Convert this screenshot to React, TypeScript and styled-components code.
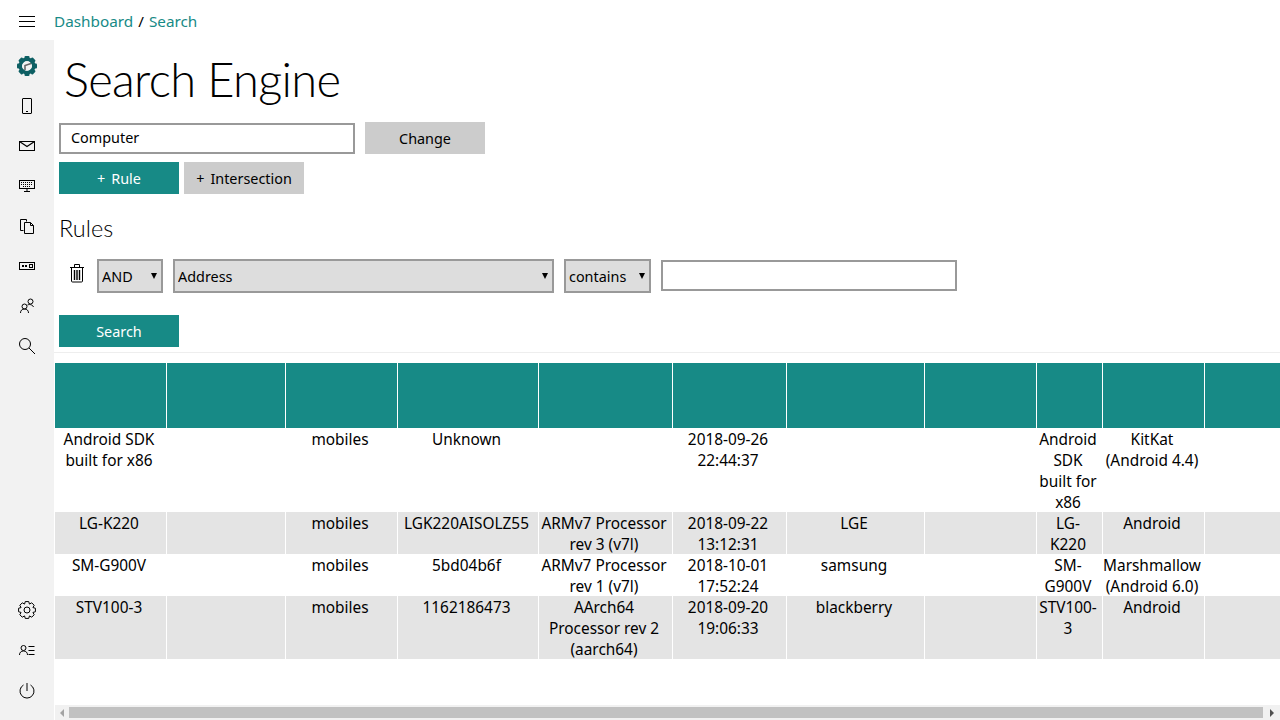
import React from "react";
import styled, { createGlobalStyle } from "styled-components";

const Global = createGlobalStyle`
  html, body { margin: 0; padding: 0; height: 100%; background: #fff; overflow: hidden; }
  body { font-family: "Noto Sans", "Open Sans", sans-serif; font-size: 15px; color: #000; }
  #root { height: 720px; }
`;

const Page = styled.div`
  width: 1280px; height: 720px; display: grid;
  grid-template-columns: 54px 1fr; grid-template-rows: 40px 1fr; overflow: hidden;
`;
const Burger = styled.div`
  display: flex; align-items: flex-start; justify-content: center; padding-top: 16px;
  svg { display: block; }
`;
const Crumbs = styled.div`
  display: flex; align-items: center; gap: 5px; font-size: 15.3px; height: 40px; padding-top: 1px; box-sizing: border-box;
  a { color: #178a86; text-decoration: none; }
`;
const Side = styled.nav`
  background: #f2f2f2; display: flex; flex-direction: column; align-items: center;
  justify-content: space-between; padding: 6px 0 9px;
`;
const SideGroup = styled.div`display: flex; flex-direction: column;`;
const SideItem = styled.div`
  width: 54px; height: 40px; display: flex; align-items: center; justify-content: center;
  svg { display: block; }
`;
const Main = styled.main`
  display: flex; flex-direction: column; min-width: 0; position: relative; overflow: hidden;
`;
const Title = styled.h1`
  margin: 8px 0 0 10px; font-family: Lato, "Noto Sans", sans-serif; font-size: 47px; line-height: 62px; font-weight: 300; letter-spacing: -0.7px;
`;
const Row = styled.div<{ $top?: number }>`
  display: flex; align-items: flex-start; margin-left: 5px; margin-top: ${p => p.$top ?? 0}px;
`;
const TextBox = styled.input<{ $spaced?: boolean }>`
  box-sizing: border-box; width: 296px; height: 31px; border: 2px solid #999; background: #fff;
  padding: 0 10px 2px; font: inherit; font-size: 14.4px; color: #000; border-radius: 0; outline: none;
  margin-top: 1px; margin-left: ${p => (p.$spaced ? 10 : 0)}px;
`;
const Btn = styled.button<{ $primary?: boolean; $spaced?: number }>`
  box-sizing: border-box; width: 120px; height: 32px; border: 0; border-radius: 0; padding: 0;
  font: inherit; font-size: 14.4px; margin-left: ${p => p.$spaced ?? 0}px;
  background: ${p => (p.$primary ? "#178a86" : "#ccc")};
  color: ${p => (p.$primary ? "#fff" : "#000")};
`;
const Plus = styled.span`margin-right: 6px;`;
const H2 = styled.h2`
  margin: 18px 0 0 5px; font-family: Lato, "Noto Sans", sans-serif; font-size: 23.5px; line-height: 32px; font-weight: 300;
`;
const TrashBox = styled.div`
  width: 38px; height: 34px; display: flex; justify-content: center;
  svg { display: block; margin-top: 5px; }
`;
const SelectWrap = styled.div<{ $spaced?: boolean }>`
  position: relative; margin-left: ${p => (p.$spaced ? 10 : 0)}px;
  &::after {
    content: ""; position: absolute; right: 6px; top: 14px; pointer-events: none;
    border-left: 3px solid transparent; border-right: 3px solid transparent; border-top: 6px solid #000;
  }
`;
const Select = styled.select<{ $w: number }>`
  display: block; box-sizing: border-box; width: ${p => p.$w}px; height: 34px; border: 2px solid #999; border-radius: 0;
  appearance: none; background-color: #ddd; color: #000; font: inherit; font-size: 14.4px; padding: 0 0 0 3px; outline: none;
`;
const Divider = styled.hr`
  border: 0; border-top: 1px solid #eee; margin: 5px 0 10px; height: 0;
`;
const TableWrap = styled.div`
  margin-left: 1px; overflow: hidden; flex: 1; min-height: 0;
`;
const Table = styled.table`
  border-collapse: separate; border-spacing: 0; table-layout: fixed; width: 1228px;
`;
const Th = styled.th`
  height: 65px; padding: 0; background: #178a86; border-right: 1px solid #fff; box-sizing: border-box;
`;
const Td = styled.td<{ $alt: boolean }>`
  padding: 0 3px 0 0; box-sizing: border-box; background: ${p => (p.$alt ? "#e4e4e4" : "#fff")};
  border-right: 1px solid #fff; text-align: center; vertical-align: top;
  font-size: 15.4px; line-height: 21px; white-space: pre-line;
`;
const CellText = styled.div`
  margin: 1px -4px -1px -4px;
`;
const ScrollBar = styled.div`
  position: absolute; left: 1px; right: 0; bottom: 0; height: 15px; background: #f1f1f1;
  display: flex; align-items: center;
`;
const Arrow = styled.div<{ $w: number }>`
  width: ${p => p.$w}px; height: 15px; display: flex; align-items: center; justify-content: center; flex: none;
`;
const Thumb = styled.div`flex: 1; height: 11px; background: #c1c1c1;`;

const widths = [112, 119, 112, 141, 134, 114, 138, 112, 66, 102, 78];
const rows = [
  ["Android SDK\nbuilt for x86", "", "mobiles", "Unknown", "", "2018-09-26\n22:44:37", "", "", "Android\nSDK\nbuilt for\nx86", "KitKat\n(Android 4.4)", ""],
  ["LG-K220", "", "mobiles", "LGK220AISOLZ55", "ARMv7 Processor\nrev 3 (v7l)", "2018-09-22\n13:12:31", "LGE", "", "LG-\nK220", "Android", ""],
  ["SM-G900V", "", "mobiles", "5bd04b6f", "ARMv7 Processor\nrev 1 (v7l)", "2018-10-01\n17:52:24", "samsung", "", "SM-\nG900V", "Marshmallow\n(Android 6.0)", ""],
  ["STV100-3", "", "mobiles", "1162186473", "AArch64\nProcessor rev 2\n(aarch64)", "2018-09-20\n19:06:33", "blackberry", "", "STV100-\n3", "Android", ""],
];

const Ico = ({ children, w = 20, h = 20 }: { children: React.ReactNode; w?: number; h?: number }) => (
  <svg width={w} height={h} viewBox={`0 0 ${w} ${h}`} fill="none" stroke="#000" strokeWidth={1}>{children}</svg>
);

const gearTeeth = Array.from({ length: 8 }, (_, i) => i * 45);

const gearPath = (() => {
  const pts: string[] = [];
  const n = 8;
  for (let i = 0; i < n; i++) {
    const a = (i / n) * Math.PI * 2;
    const step = (Math.PI * 2) / n;
    [[6.4, -0.5], [8.6, -0.26], [8.6, 0.26], [6.4, 0.5]].forEach(([r, t]) => {
      const x = 10 + r * Math.sin(a + t * step);
      const y = 9 - r * Math.cos(a + t * step);
      pts.push(`${x.toFixed(2)} ${y.toFixed(2)}`);
    });
  }
  return `M${pts.join("L")}Z`;
})();

const topIcons = [
  <svg key="g" width="22" height="22" viewBox="0 0 22 22">
    {gearTeeth.map(a => <rect key={a} x="8.5" y="1" width="5" height="5" rx="1" fill="#0d5f63" transform={`rotate(${a} 11 11)`} />)}
    <circle cx="11" cy="11" r="6.8" fill="none" stroke="#0d5f63" strokeWidth="3.4" />
    <path d="M9 15V10.5L15 8.5" fill="none" stroke="#666" strokeWidth="1.6" />
  </svg>,
  <Ico key="p"><rect x="5.5" y="2.5" width="9" height="15" rx="0.5" /><path d="M9 15.500h2" /></Ico>,
  <Ico key="m"><rect x="2.500" y="5.500" width="15" height="9" /><path d="M2.500 5.500L10 10.500L17.500 5.500" strokeWidth="1.2" /></Ico>,
  <Ico key="k"><rect x="2.500" y="4.500" width="15" height="8" /><path d="M4 6.500h12M4 8.500h12M6 10.500h8" strokeDasharray="1 1" /><path d="M10 12.500v2.500M7 15.500h6" /></Ico>,
  <Ico key="d"><path d="M3.500 3.500h6v2M3.500 3.500v11h3" /><path d="M7.500 6.500h6l3 3v8h-9z" /><path d="M13.500 6.500v3h3" /></Ico>,
  <Ico key="r"><rect x="2.500" y="6.500" width="15" height="7" /><path d="M5 10h2M8 10h2" strokeWidth="2" /><rect x="12.500" y="8.500" width="3" height="3" /></Ico>,
  <Ico key="u"><circle cx="7.500" cy="10.500" r="2.500" /><path d="M3.500 17c0-2.500 1.500-4 4-4s4 1.500 4 4" /><circle cx="13.500" cy="5.500" r="2.500" /><path d="M10.500 9c1-.8 5-.8 6 2" /></Ico>,
  <Ico key="s"><circle cx="8" cy="8" r="5.500" /><path d="M12 12l6 6" /></Ico>,
];
const bottomIcons = [
  <svg key="c" width="20" height="20" viewBox="0 0 20 20" fill="none" stroke="#000" strokeWidth="1">
    <path d={gearPath} strokeLinejoin="round" />
    <circle cx="10" cy="9" r="3" />
  </svg>,
  <Ico key="l"><circle cx="6.500" cy="7" r="2.500" /><path d="M2.500 14c0-2.500 1.500-4 4-4s4 1.500 4 4" /><path d="M11.500 5.500h6M11.500 9.500h6M11.500 13.500h6" /></Ico>,
  <Ico key="o"><path d="M6.500 4A7 7 0 1 0 13.500 4" /><path d="M10 2v8" /></Ico>,
];

export default function App() {
  return (
    <Page>
      <Global />
      <Burger>
        <svg width="16" height="11" viewBox="0 0 16 11" stroke="#000"><path d="M0 .5h16M0 5.500h16M0 10.500h16" /></svg>
      </Burger>
      <Crumbs><a href="#d">Dashboard</a><span>/</span><a href="#s">Search</a></Crumbs>
      <Side>
        <SideGroup>{topIcons.map((ic, i) => <SideItem key={i}>{ic}</SideItem>)}</SideGroup>
        <SideGroup>{bottomIcons.map((ic, i) => <SideItem key={i}>{ic}</SideItem>)}</SideGroup>
      </Side>
      <Main>
        <Title>Search Engine</Title>
        <Row $top={12}>
          <TextBox defaultValue="Computer" />
          <Btn $spaced={10}>Change</Btn>
        </Row>
        <Row $top={8}>
          <Btn $primary><Plus>+</Plus>Rule</Btn>
          <Btn $spaced={5}><Plus>+</Plus>Intersection</Btn>
        </Row>
        <H2>Rules</H2>
        <Row $top={15}>
          <TrashBox>
            <svg width="20" height="20" viewBox="0 0 20 20" fill="none" stroke="#000">
              <path d="M2 3.500h14M6.500 3.500V.5h5v3M3.500 3.500v13.500a1 1 0 0 0 1 1h9a1 1 0 0 0 1-1v-13.500" />
              <path d="M6.500 6v10M9 6v10M11.500 6v10" strokeWidth="1.400" />
            </svg>
          </TrashBox>
          <SelectWrap><Select $w={66} defaultValue="AND"><option>AND</option><option>OR</option></Select></SelectWrap>
          <SelectWrap $spaced><Select $w={381} defaultValue="Address"><option>Address</option></Select></SelectWrap>
          <SelectWrap $spaced><Select $w={87} defaultValue="contains"><option>contains</option></Select></SelectWrap>
          <TextBox $spaced />
        </Row>
        <Row $top={22}>
          <Btn $primary>Search</Btn>
        </Row>
        <Divider />
        <TableWrap>
          <Table>
            <colgroup>{widths.map((w, i) => <col key={i} width={w} />)}</colgroup>
            <thead><tr>{widths.map((_, i) => <Th key={i} />)}</tr></thead>
            <tbody>
              {rows.map((r, i) => (
                <tr key={i}>{r.map((c, j) => <Td key={j} $alt={i % 2 === 1}><CellText>{c}</CellText></Td>)}</tr>
              ))}
            </tbody>
          </Table>
        </TableWrap>
        <ScrollBar>
          <Arrow $w={14}><svg width="6" height="8" viewBox="0 0 6 8"><path d="M5 0v8L1 4z" fill="#a3a3a3" /></svg></Arrow>
          <Thumb />
          <Arrow $w={17}><svg width="6" height="8" viewBox="0 0 6 8"><path d="M1 0v8l4-4z" fill="#505050" /></svg></Arrow>
        </ScrollBar>
      </Main>
    </Page>
  );
}
